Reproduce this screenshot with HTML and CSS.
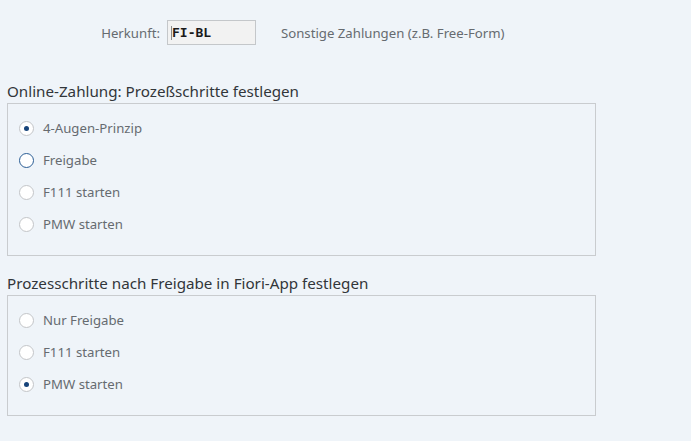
FILE: index.html
```html
<!DOCTYPE html>
<html lang="de">
<head>
<meta charset="utf-8">
<title>Zahlung</title>
<link rel="stylesheet" href="styles.css">
</head>
<body>
<div class="page">
  <div class="header-row">
    <span class="field-label">Herkunft:</span>
    <span class="input"><span class="caret"></span>FI-BL</span>
    <span class="field-desc">Sonstige Zahlungen (z.B. Free-Form)</span>
  </div>

  <section class="group">
    <h2 class="group-title">Online-Zahlung: Prozeßschritte festlegen</h2>
    <div class="group-box">
      <div class="radio-row"><span class="radio checked"></span><span class="radio-label">4-Augen-Prinzip</span></div>
      <div class="radio-row"><span class="radio focused"></span><span class="radio-label">Freigabe</span></div>
      <div class="radio-row"><span class="radio"></span><span class="radio-label">F111 starten</span></div>
      <div class="radio-row"><span class="radio"></span><span class="radio-label">PMW starten</span></div>
    </div>
  </section>

  <section class="group">
    <h2 class="group-title">Prozesschritte nach Freigabe in Fiori-App festlegen</h2>
    <div class="group-box">
      <div class="radio-row"><span class="radio"></span><span class="radio-label">Nur Freigabe</span></div>
      <div class="radio-row"><span class="radio"></span><span class="radio-label">F111 starten</span></div>
      <div class="radio-row"><span class="radio checked"></span><span class="radio-label">PMW starten</span></div>
    </div>
  </section>
</div>
</body>
</html>
```

FILE: styles.css
```css
html, body {
  margin: 0;
  padding: 0;
  background: #eff4f9;
}
body {
  font-family: "Noto Sans", "Liberation Sans", Arial, sans-serif;
  font-size: 13.2px;
  color: #32363a;
}
.page {
  padding: 20px 0 0 7px;
  width: 589px;
}
.header-row {
  display: flex;
  align-items: center;
  height: 25px;
}
.field-label {
  width: 153px;
  text-align: right;
  color: #666b70;
  margin-right: 7px;
}
.input {
  box-sizing: border-box;
  width: 89px;
  height: 25px;
  border: 1px solid #c4c7ca;
  background: #f2f2f2;
  font-family: "DejaVu Sans Mono", "Liberation Mono", monospace;
  font-weight: 600;
  font-size: 13px;
  color: #1a1a1a;
  display: flex;
  align-items: center;
  padding-left: 3px;
}
.caret {
  width: 1px;
  height: 14px;
  background: #8a8a8a;
}
.field-desc {
  color: #666b70;
  margin-left: 25px;
}
.group {
  margin-top: 37px;
}
.group + .group {
  margin-top: 18px;
}
.group-title {
  margin: 0 0 3px 0;
  font-size: 15.2px;
  font-weight: normal;
  line-height: 18px;
  color: #32363a;
}
.group-box {
  border: 1px solid #c9cccf;
  padding: 8px 0 15px 0;
}
.radio-row {
  display: flex;
  align-items: center;
  height: 32px;
}
.radio {
  box-sizing: border-box;
  width: 15px;
  height: 15px;
  border-radius: 50%;
  border: 1px solid #c3c5c8;
  background: #ffffff;
  margin-left: 11px;
  margin-right: 9px;
  display: flex;
  align-items: center;
  justify-content: center;
}
.radio.checked::after {
  content: "";
  width: 5px;
  height: 5px;
  border-radius: 50%;
  background: #17447a;
}
.radio.focused {
  border: 1px solid #2a5d95;
}
.radio-label {
  color: #666b70;
}
```
